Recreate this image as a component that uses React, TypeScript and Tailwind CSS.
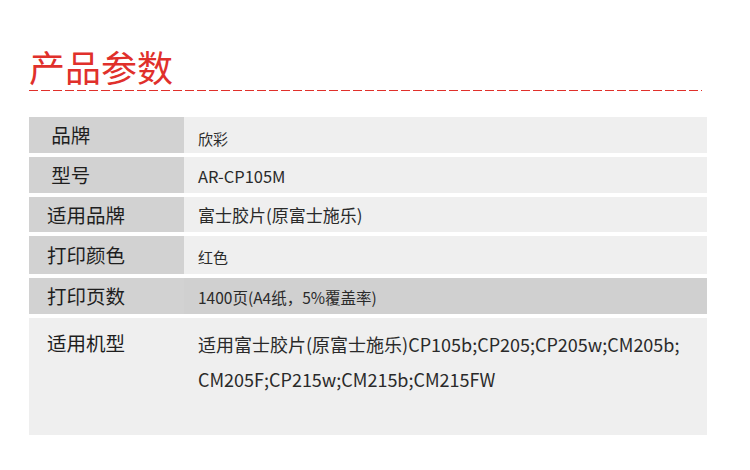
import React from 'react';

const font = { fontFamily: '"Noto Sans CJK SC", "Noto Sans", sans-serif' };

type Row = { label: string; value: React.ReactNode; h: string; valueCls?: string; dark?: boolean };

const rows: Row[] = [
  { label: '\u00a0品牌', value: '欣彩', h: 'h-[36px]', valueCls: 'text-[15px] pt-[8px]' },
  { label: '\u00a0型号', value: 'AR-CP105M', h: 'h-[36px]', valueCls: 'text-[16.5px] pt-[3px]' },
  { label: '适用品牌', value: '富士胶片(原富士施乐)', h: 'h-[35px]', valueCls: 'text-[17px]' },
  { label: '打印颜色', value: '红色', h: 'h-[38px]', valueCls: 'text-[15px] pt-[5px]' },
  { label: '打印页数', value: '1400页(A4纸，5%覆盖率)', h: 'h-[36px]', valueCls: 'text-[15.5px] pt-[4px]', dark: true },
];

const App: React.FC = () => {
  return (
    <div className="w-[750px] h-[470px] bg-white overflow-hidden" style={font}>
      <div className="pl-[29px] pt-[48px]">
        <h1 className="text-[36px] leading-none text-[#e0302b] font-normal">产品参数</h1>
        <div className="mt-[6px] w-[673px] h-px bg-[repeating-linear-gradient(90deg,#e0302b_0_9px,transparent_9px_12px)]" />
      </div>

      <div className="ml-[29px] mt-[26px] w-[678px] flex flex-col gap-[4px] text-[#1e1e1e]">
        {rows.map((r) => (
          <div key={r.label} className={`flex ${r.h}`}>
            <div className="w-[155px] bg-[#d2d2d2] flex items-center pl-[18px] text-[19.5px]">{r.label}</div>
            <div className={`flex-1 flex items-center pl-[14px] text-[#2a2a2a] ${r.dark ? 'bg-[#d0d0d0]' : 'bg-[#efefef]'} ${r.valueCls ?? ''}`}>
              {r.value}
            </div>
          </div>
        ))}
        <div className="flex h-[117px] bg-[#efefef]">
          <div className="w-[155px] pl-[18px] pt-[12px] text-[19.5px] leading-[26px]">适用机型</div>
          <div className="flex-1 pl-[14px] pt-[9px] text-[18px] leading-[35px] text-[#2a2a2a]">
            适用富士胶片(原富士施乐)CP105b;CP205;CP205w;CM205b;
            <br />
            CM205F;CP215w;CM215b;CM215FW
          </div>
        </div>
      </div>
    </div>
  );
};

export default App;
